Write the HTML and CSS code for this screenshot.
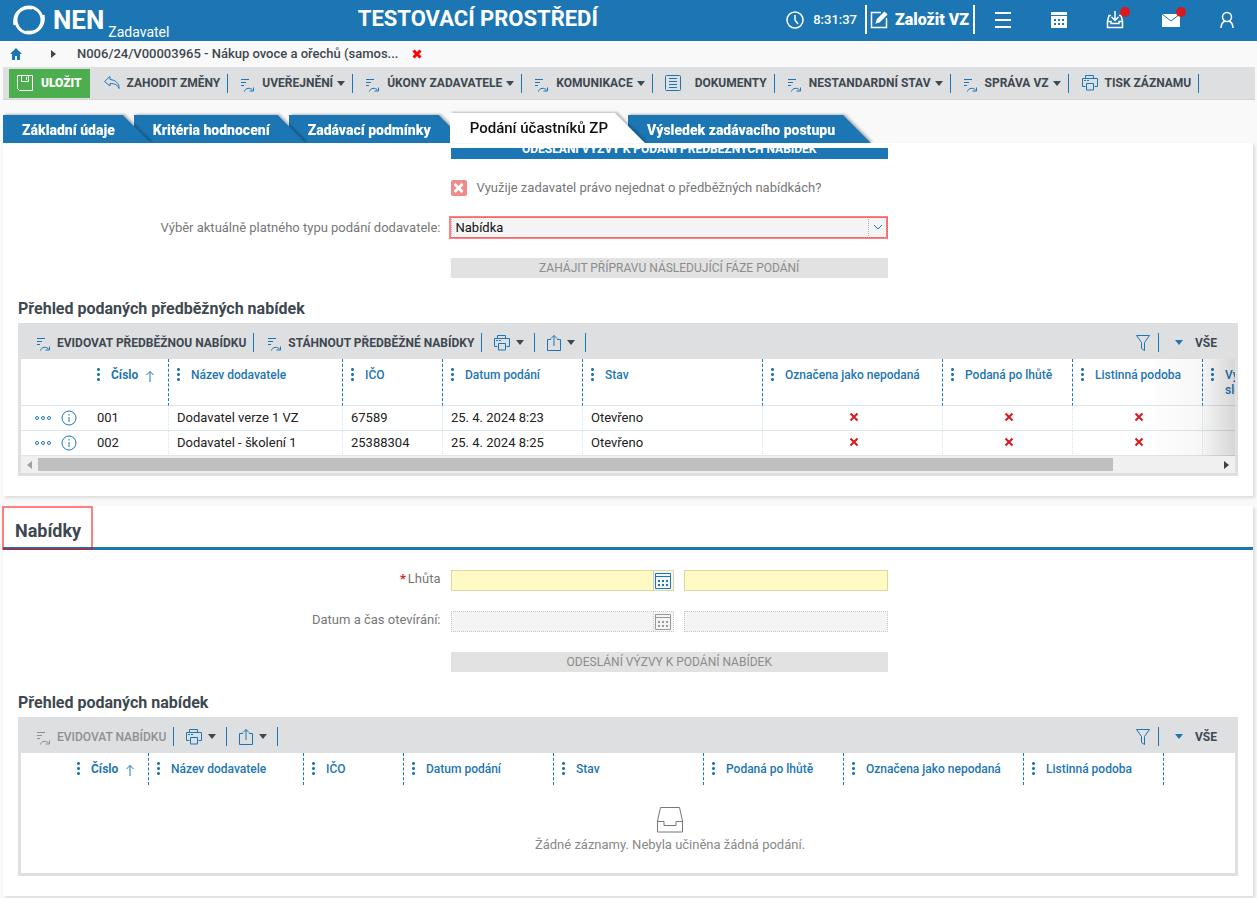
FILE: index.html
```html
<!DOCTYPE html>
<html lang="cs">
<head>
<meta charset="utf-8">
<meta name="viewport" content="width=device-width, initial-scale=1">
<title>NEN Zadavatel</title>
<link rel="stylesheet" href="styles.css">
</head>
<body>
<svg class="sprite" aria-hidden="true">
  <symbol id="i-flow" viewBox="0 0 16 16"><path d="M1 2.500h8M1 5.500h5M1 8.500h3M4.500 14.500c.5-3.500 6-4.500 8.500-1M13.500 10.500v3.500h-4"/></symbol>
  <symbol id="i-print" viewBox="0 0 18 18"><path d="M4.500 4.500v-3h8v3M4.500 12.500h-3v-8h15v8h-3M5.500 9.500h7v6.500h-7zM3 6.500h2M6 6.500h2"/></symbol>
  <symbol id="i-share" viewBox="0 0 16 18"><path d="M5 5.500H1.500v11h13v-11H11M8 12V1.500M5 4.500l3-3 3 3"/></symbol>
  <symbol id="i-filter" viewBox="0 0 16 18"><path d="M1.500 1.500h13l-5 7v8l-3-2v-6z"/></symbol>
  <symbol id="i-doc" viewBox="0 0 18 18"><rect x="1.500" y="1.500" width="15" height="15" rx="1"/><path d="M5 4.500h8M5 7.500h8M5 10.500h8M5 13.500h8"/></symbol>
  <symbol id="i-undo" viewBox="0 0 18 16"><path d="M7 1.500L1.500 6.500 7 11V8.500c5 0 7.500 1.500 9 5 .5-5-3.500-8.500-9-9z"/></symbol>
  <symbol id="i-save" viewBox="0 0 18 18"><path d="M1.500 1.500h15v15h-13l-2-2zM5.500 1.500v6h7v-6M10.500 3v3"/></symbol>
  <symbol id="i-info" viewBox="0 0 16 16"><circle cx="8" cy="8" r="7"/><path d="M8 7v5M8 4v1.500"/></symbol>
  <symbol id="i-more" viewBox="0 0 18 6"><circle cx="3" cy="3" r="1.500"/><circle cx="9" cy="3" r="1.500"/><circle cx="15" cy="3" r="1.500"/></symbol>
  <symbol id="i-up" viewBox="0 0 10 12"><path d="M5 12V1.500M1.500 5L5 1.500 8.500 5"/></symbol>
  <symbol id="i-x" viewBox="0 0 10 10"><path d="M1.500 1.500l7 7M8.500 1.500l-7 7"/></symbol>
  <symbol id="i-cal" viewBox="0 0 16 16"><path d="M.5.5h15v15H.5zM.5 3.500h15"/><path d="M3 8h10M3 12h10" stroke-width="2" stroke-dasharray="2 2"/></symbol>
</svg>

<header class="top">
  <div class="brand">
    <svg class="brand-ring" viewBox="0 0 32 32"><circle cx="16" cy="16" r="13"/><path d="M2 21C0 10 8 2 19 4M30 11C32 22 24 30 13 28"/></svg>
    <span class="brand-name">NEN</span><span class="brand-role">Zadavatel</span>
  </div>
  <h1 class="env">TESTOVACÍ PROSTŘEDÍ</h1>
  <div class="clock">
    <svg class="line" width="18" height="18" viewBox="0 0 18 18"><circle cx="9" cy="9" r="8"/><path d="M9 4v5l3 4"/></svg>
    <time>8:31:37</time>
  </div>
  <button class="create" type="button">
    <svg class="line" width="18" height="18" viewBox="0 0 18 18"><path d="M11 1.500H1.500v15h15V7"/><path d="M6.500 11.500l1-3 7-7 2 2-7 7z" fill="#fff"/></svg>
    Založit VZ
  </button>
  <nav class="top-nav">
    <button type="button" aria-label="Menu"><svg class="line thick" width="18" height="18" viewBox="0 0 18 18"><path d="M1 2h16M1 9h16M1 16h16"/></svg></button>
    <button type="button" aria-label="Kalendář"><svg width="18" height="18" viewBox="0 0 18 18"><path d="M1 1h16v3H1zM1 5h16v12H1z" fill="#fff"/><path d="M4 9h10M4 13h10" stroke="#1d76b4" stroke-width="2" stroke-dasharray="2 2"/></svg></button>
    <button type="button" aria-label="Stažené"><svg class="line" width="18" height="18" viewBox="0 0 18 18"><path d="M5 4.500H3L1.500 10v6.500h15V10L15 4.500h-2M1.500 10.500H5v2h8v-2h3.500M9 0v9M5.500 6L9 9.500 12.500 6"/></svg><i class="dot"></i></button>
    <button type="button" aria-label="Zprávy"><svg width="18" height="18" viewBox="0 0 18 18"><path d="M0 3h18v13H0z" fill="#fff"/><path d="M0 3l9 7 9-7" fill="none" stroke="#1d76b4"/></svg><i class="dot"></i></button>
    <button type="button" aria-label="Uživatel"><svg class="line" width="18" height="18" viewBox="0 0 18 18"><circle cx="9" cy="6" r="4.500"/><path d="M3 17c0-4 2-6 4-7M15 17c0-4-2-6-4-7"/></svg></button>
  </nav>
</header>

<nav class="crumbs">
  <a href="#" aria-label="Domů"><svg width="12" height="12" viewBox="0 0 12 12"><path d="M6 0l6 6h-2v6H7V8H5v4H2V6H0z" fill="#1d76b4"/></svg></a>
  <i class="caret-right"></i>
  <a class="crumb-text" href="#">N006/24/V00003965 - Nákup ovoce a ořechů (samos...</a>
  <button type="button" class="close" aria-label="Zavřít"><svg width="10" height="10"><use href="#i-x"/></svg></button>
</nav>

<div class="toolbar">
  <button type="button" class="save"><svg class="ic" width="18" height="18"><use href="#i-save"/></svg>ULOŽIT</button>
  <button type="button" class="tool"><svg class="ic" width="18" height="16"><use href="#i-undo"/></svg>ZAHODIT ZMĚNY</button>
  <button type="button" class="tool"><svg class="ic low" width="16" height="16"><use href="#i-flow"/></svg>UVEŘEJNĚNÍ<i class="caret"></i></button>
  <button type="button" class="tool"><svg class="ic low" width="16" height="16"><use href="#i-flow"/></svg>ÚKONY ZADAVATELE<i class="caret"></i></button>
  <button type="button" class="tool"><svg class="ic low" width="16" height="16"><use href="#i-flow"/></svg>KOMUNIKACE<i class="caret"></i></button>
  <button type="button" class="tool wide"><svg class="ic" width="18" height="18"><use href="#i-doc"/></svg>DOKUMENTY</button>
  <button type="button" class="tool"><svg class="ic low" width="16" height="16"><use href="#i-flow"/></svg>NESTANDARDNÍ STAV<i class="caret"></i></button>
  <button type="button" class="tool"><svg class="ic low" width="16" height="16"><use href="#i-flow"/></svg>SPRÁVA VZ<i class="caret"></i></button>
  <button type="button" class="tool"><svg class="ic" width="18" height="18"><use href="#i-print"/></svg>TISK ZÁZNAMU</button>
</div>

<ul class="tabs">
  <li class="t1"><button type="button">Základní údaje</button></li>
  <li class="t2"><button type="button">Kritéria hodnocení</button></li>
  <li class="t3"><button type="button">Zadávací podmínky</button></li>
  <li class="active"><button type="button">Podání účastníků ZP</button></li>
  <li class="t5"><button type="button">Výsledek zadávacího postupu</button></li>
</ul>

<main>
  <section class="panel first">
    <div class="scroll">
      <div class="form">
        <button type="button" class="wide-btn primary">ODESLÁNÍ VÝZVY K PODÁNÍ PŘEDBĚŽNÝCH NABÍDEK</button>
        <label class="check"><input type="checkbox" checked>Využije zadavatel právo nejednat o předběžných nabídkách?</label>
        <label class="lbl" for="typ">Výběr aktuálně platného typu podání dodavatele:</label>
        <div class="select marked">
          <select id="typ"><option>Nabídka</option></select>
          <svg class="ic" width="10" height="6" viewBox="0 0 10 6"><path d="M1 1l4 4 4-4"/></svg>
        </div>
        <button type="button" class="wide-btn" disabled>ZAHÁJIT PŘÍPRAVU NÁSLEDUJÍCÍ FÁZE PODÁNÍ</button>
      </div>
    </div>
    <div class="block">
      <h3>Přehled podaných předběžných nabídek</h3>
      <div class="grid">
        <div class="grid-bar">
          <button type="button" class="tool"><svg class="ic low" width="16" height="16"><use href="#i-flow"/></svg>EVIDOVAT PŘEDBĚŽNOU NABÍDKU</button>
          <button type="button" class="tool"><svg class="ic low" width="16" height="16"><use href="#i-flow"/></svg>STÁHNOUT PŘEDBĚŽNÉ NABÍDKY</button>
          <button type="button" class="tool icon-only" aria-label="Tisk"><svg class="ic" width="18" height="18"><use href="#i-print"/></svg><i class="caret"></i></button>
          <button type="button" class="tool icon-only" aria-label="Export"><svg class="ic" width="16" height="18"><use href="#i-share"/></svg><i class="caret"></i></button>
          <button type="button" class="tool filter" aria-label="Filtr"><svg class="ic" width="16" height="18"><use href="#i-filter"/></svg></button>
          <button type="button" class="all"><i class="caret"></i>VŠE</button>
        </div>
        <div class="grid-body fade">
          <table class="tall">
            <colgroup><col class="w68"><col class="w80"><col class="w174"><col class="w100"><col class="w140"><col class="w180"><col class="w180"><col class="w130"><col class="w130"><col class="w140"></colgroup>
            <thead><tr>
              <th></th>
              <th class="sorted"><i class="dots"></i>Číslo<svg class="ic" width="10" height="12"><use href="#i-up"/></svg></th>
              <th><i class="dots"></i>Název dodavatele</th>
              <th><i class="dots"></i>IČO</th>
              <th><i class="dots"></i>Datum podání</th>
              <th><i class="dots"></i>Stav</th>
              <th><i class="dots"></i>Označena jako nepodaná</th>
              <th><i class="dots"></i>Podaná po lhůtě</th>
              <th><i class="dots"></i>Listinná podoba</th>
              <th><i class="dots"></i>Vyloučen<br>služebně</th>
            </tr></thead>
            <tbody>
              <tr>
                <td class="acts"><button type="button" aria-label="Akce"><svg class="ic" width="18" height="6"><use href="#i-more"/></svg></button><button type="button" aria-label="Detail"><svg class="ic" width="16" height="16"><use href="#i-info"/></svg></button></td>
                <td>001</td><td>Dodavatel verze 1 VZ</td><td>67589</td><td>25. 4. 2024 8:23</td><td>Otevřeno</td>
                <td class="no"><svg width="10" height="10"><use href="#i-x"/></svg></td><td class="no"><svg width="10" height="10"><use href="#i-x"/></svg></td><td class="no"><svg width="10" height="10"><use href="#i-x"/></svg></td><td></td>
              </tr>
              <tr>
                <td class="acts"><button type="button" aria-label="Akce"><svg class="ic" width="18" height="6"><use href="#i-more"/></svg></button><button type="button" aria-label="Detail"><svg class="ic" width="16" height="16"><use href="#i-info"/></svg></button></td>
                <td>002</td><td>Dodavatel - školení 1</td><td>25388304</td><td>25. 4. 2024 8:25</td><td>Otevřeno</td>
                <td class="no"><svg width="10" height="10"><use href="#i-x"/></svg></td><td class="no"><svg width="10" height="10"><use href="#i-x"/></svg></td><td class="no"><svg width="10" height="10"><use href="#i-x"/></svg></td><td></td>
              </tr>
            </tbody>
          </table>
        </div>
        <div class="hbar"><i class="arrow-l"></i><span class="track"><span class="thumb"></span></span><i class="arrow-r"></i></div>
      </div>
    </div>
  </section>

  <section class="panel">
    <div class="panel-head"><h2 class="marked">Nabídky</h2></div>
    <div class="form second">
      <label class="lbl" for="lhuta"><span class="req">*</span>Lhůta</label>
      <div class="pair">
        <div class="date"><input id="lhuta" type="text"><button type="button" aria-label="Kalendář"><svg class="ic" width="16" height="16"><use href="#i-cal"/></svg></button></div>
        <input class="field" type="text" aria-label="Čas lhůty">
      </div>
      <label class="lbl" for="otevirani">Datum a čas otevírání:</label>
      <div class="pair off">
        <div class="date"><input id="otevirani" type="text" disabled><button type="button" aria-label="Kalendář" disabled><svg class="ic" width="16" height="16"><use href="#i-cal"/></svg></button></div>
        <input class="field" type="text" aria-label="Čas otevírání" disabled>
      </div>
      <button type="button" class="wide-btn" disabled>ODESLÁNÍ VÝZVY K PODÁNÍ NABÍDEK</button>
    </div>
    <div class="block">
      <h3>Přehled podaných nabídek</h3>
      <div class="grid">
        <div class="grid-bar">
          <button type="button" class="tool" disabled><svg class="ic low" width="16" height="16"><use href="#i-flow"/></svg>EVIDOVAT NABÍDKU</button>
          <button type="button" class="tool icon-only" aria-label="Tisk"><svg class="ic" width="18" height="18"><use href="#i-print"/></svg><i class="caret"></i></button>
          <button type="button" class="tool icon-only" aria-label="Export"><svg class="ic" width="16" height="18"><use href="#i-share"/></svg><i class="caret"></i></button>
          <button type="button" class="tool filter" aria-label="Filtr"><svg class="ic" width="16" height="18"><use href="#i-filter"/></svg></button>
          <button type="button" class="all"><i class="caret"></i>VŠE</button>
        </div>
        <div class="grid-body">
          <table class="short">
            <colgroup><col class="w48"><col class="w80"><col class="w155"><col class="w100"><col class="w150"><col class="w150"><col class="w140"><col class="w180"><col class="w140"></colgroup>
            <thead><tr>
              <th></th>
              <th class="sorted"><i class="dots"></i>Číslo<svg class="ic" width="10" height="12"><use href="#i-up"/></svg></th>
              <th><i class="dots"></i>Název dodavatele</th>
              <th><i class="dots"></i>IČO</th>
              <th><i class="dots"></i>Datum podání</th>
              <th><i class="dots"></i>Stav</th>
              <th><i class="dots"></i>Podaná po lhůtě</th>
              <th><i class="dots"></i>Označena jako nepodaná</th>
              <th><i class="dots"></i>Listinná podoba</th>
            </tr></thead>
          </table>
        </div>
        <div class="empty">
          <svg width="28" height="26" viewBox="0 0 28 26"><path d="M4.500.5h19L26.500 14v11h-25V14zM1.500 14.500h6.500v4h12v-4h6.500"/></svg>
          <p>Žádné záznamy. Nebyla učiněna žádná podání.</p>
        </div>
      </div>
    </div>
  </section>
</main>
</body>
</html>
```
FILE: styles.css
```css
:root {
  --blue: #1d76b4;
  --dark: #3e4850;
  --bar: #dedfe0;
  --grey: #777;
  --mark: rgba(255, 0, 0, .5);
}
* { box-sizing: border-box; }
body {
  margin: 0;
  background: #f9f9f9;
  font-family: Roboto, "Liberation Sans", sans-serif;
  font-size: 13px;
  line-height: 16px;
  color: #222;
}
button, input, select { font: inherit; color: inherit; margin: 0; }
button { border: 0; background: none; padding: 0; cursor: pointer; white-space: nowrap; }
h1, h2, h3, p, ul { margin: 0; padding: 0; }
.sprite { position: absolute; width: 0; height: 0; }
svg { display: block; flex: none; }
.ic { fill: none; stroke: var(--blue); stroke-width: 1; }
.line { fill: none; stroke: #fff; stroke-width: 1.5; }
.line.thick { stroke-width: 2; }

.top {
  display: flex;
  align-items: center;
  height: 41px;
  padding: 0 2px 2px 13px;
  background: var(--blue);
  color: #fff;
}
.brand { display: flex; align-items: center; }
.brand-ring { width: 32px; height: 32px; fill: none; stroke: #fff; stroke-width: 3; }
.brand-name { margin-left: 8px; font-size: 26px; font-weight: 700; line-height: 32px; }
.brand-role { align-self: flex-end; margin-left: 4px; font-size: 14px; line-height: 7px; }
.env { flex: 1; text-align: center; font-size: 22px; line-height: 24px; height: 26px; font-weight: 700; }
.clock { display: flex; align-items: center; gap: 9px; margin-right: 8px; font-weight: 500; }
.create {
  display: flex;
  align-items: center;
  gap: 7px;
  height: 29px;
  padding: 0 4px 0 3px;
  border: solid #fff;
  border-width: 0 2px;
  font-size: 16px;
  font-weight: 900;
}
.top-nav { display: flex; }
.top-nav button { position: relative; display: grid; place-items: center; width: 56px; height: 36px; }
.dot { position: absolute; right: 13px; top: 5px; width: 10px; height: 10px; border-radius: 50%; background: #d8191f; }

.crumbs { display: flex; align-items: center; height: 26px; padding: 0 10px; font-weight: 500; }
.caret-right { margin: 0 21px 0 29px; border: solid transparent; border-width: 4px 0 4px 5px; border-left-color: var(--dark); }
.crumb-text { color: var(--dark); text-decoration: none; }
.close { margin-left: 14px; }
.close svg { stroke: #f00; stroke-width: 3; }

.toolbar {
  display: flex;
  align-items: center;
  height: 33px;
  margin: 0 2px 0 3px;
  padding: 0 6px;
  background: var(--bar);
  border-bottom: 1px solid #d2d3d4;
}
.save {
  display: flex;
  align-items: center;
  gap: 7px;
  height: 29px;
  margin-right: 1px;
  padding: 0 8px 0 7px;
  background: #4cae4f;
  color: #fff;
  font-size: 12px;
  font-weight: 900;
}
.save .ic { stroke: #fff; }
.tool {
  display: flex;
  align-items: center;
  gap: 6px;
  height: 19px;
  padding: 0 7px 0 12px;
  border-right: 1px solid var(--blue);
  color: var(--dark);
  font-size: 12px;
  font-weight: 700;
}
.tool.wide { gap: 13px; padding-left: 11px; }
.tool .low { align-self: flex-end; }
.tool .caret { margin-left: -2px; }
.tool:disabled { color: #8e8f90; font-weight: 500; }
.tool:disabled .ic { stroke: #8e8f90; }
.caret { border: solid transparent; border-width: 5px 4px 0; border-top-color: var(--dark); }

.tabs { display: flex; align-items: flex-end; height: 43px; padding-left: 3px; list-style: none; }
.tabs li { position: relative; margin-right: -17px; filter: drop-shadow(2px -1px 1px rgba(0, 0, 0, .25)); }
.tabs button {
  display: block;
  height: 28px;
  padding: 2px 36px 0 19px;
  background: var(--blue);
  color: #fff;
  font-size: 14px;
  font-weight: 900;
  clip-path: polygon(0 0, calc(100% - 28px) 0, 100% 100%, 0 100%);
}
.t1 { z-index: 3; }
.t2 { z-index: 2; }
.t3, .t5 { z-index: 1; }
.tabs .active { z-index: 4; }
.tabs .active button {
  height: 30px;
  padding: 0 37px 0 20px;
  background: #fff;
  color: #111;
  font-size: 15px;
  font-weight: 500;
  clip-path: polygon(0 0, calc(100% - 30px) 0, 100% 100%, 0 100%);
}

.panel {
  margin: 0 4px 10px 3px;
  padding-bottom: 20px;
  background: #fff;
  box-shadow: 2px 2px 3px rgba(0, 0, 0, .12);
}
.first { padding-top: 5px; }
.scroll { overflow: hidden; }
.form {
  display: grid;
  grid-template-columns: 35% 35%;
  column-gap: 10px;
  row-gap: 20px;
  align-items: center;
}
.scroll .form { margin-top: -9px; }
.wide-btn {
  grid-column: 2;
  height: 20px;
  background: #e2e2e2;
  color: #8c8c8c;
  font-size: 12px;
  text-align: center;
}
.wide-btn.primary { background: var(--blue); color: #fff; font-weight: 700; }
.check { grid-column: 2; display: flex; align-items: center; gap: 10px; height: 18px; color: var(--grey); white-space: nowrap; }
.check input { appearance: none; display: grid; place-items: center; width: 16px; height: 16px; border-radius: 2px; background: #ee8b8b; }
.check input:checked::before {
  content: "";
  width: 10px;
  height: 10px;
  background: #fff;
  clip-path: polygon(0 20%, 20% 0, 50% 30%, 80% 0, 100% 20%, 70% 50%, 100% 80%, 80% 100%, 50% 70%, 20% 100%, 0 80%, 30% 50%);
}
.lbl { text-align: right; color: var(--grey); }
.req { margin-right: 2px; color: #e02020; font-weight: 700; }
.marked { position: relative; }
.marked::after { content: ""; position: absolute; inset: -1px 0 -1px -2px; border: 2px solid var(--mark); pointer-events: none; }
.select { height: 21px; }
.select select {
  appearance: none;
  display: block;
  width: 100%;
  height: 21px;
  padding: 0 24px 0 4px;
  border: 1px dotted #c4c4c4;
  border-radius: 0;
  background: #f4f4f4;
  color: #111;
}
.select .ic { position: absolute; right: 5px; top: 7px; }
.select::before { content: ""; position: absolute; right: 19px; top: 2px; bottom: 2px; border-left: 1px dotted #b0b0b0; }

.block { padding: 0 15px; }
h3 { padding: 20px 0 4px; font-size: 16px; line-height: 21px; font-weight: 700; color: var(--dark); }
.grid { border: 3px solid var(--bar); border-top: 0; }
.grid-bar { display: flex; align-items: center; height: 36px; padding: 3px 18px 0 2px; background: var(--bar); }
.grid-bar .tool { gap: 5px; padding-left: 13px; }
.grid-bar .tool.icon-only { padding-right: 10px; padding-left: 11px; }
.grid-bar .icon-only .caret { margin-left: 0; }
.grid-bar .filter { margin-left: auto; padding: 0 7px 0 0; }
.all { display: flex; align-items: center; gap: 12px; padding-left: 16px; font-size: 12px; font-weight: 700; color: var(--dark); }
.all .caret { border-top-color: var(--blue); }

.grid-body { position: relative; overflow: hidden; }
.fade::after { content: ""; position: absolute; inset: 0 0 0 auto; width: 90px; background: linear-gradient(90deg, rgba(0, 0, 0, 0), rgba(0, 0, 0, .03) 60%, rgba(0, 0, 0, .16)); pointer-events: none; }
table { table-layout: fixed; width: 0; border-collapse: separate; border-spacing: 0; }
.w48 { width: 48px; } .w68 { width: 68px; } .w80 { width: 80px; } .w100 { width: 100px; }
.w130 { width: 130px; } .w140 { width: 140px; } .w150 { width: 150px; } .w155 { width: 155px; }
.w174 { width: 174px; } .w180 { width: 180px; }
th {
  position: relative;
  height: 32px;
  padding: 9px 0 0 22px;
  border-right: 1px dashed var(--blue);
  vertical-align: top;
  text-align: left;
  color: var(--blue);
  font-size: 12px;
  font-weight: 500;
  line-height: 15px;
  white-space: nowrap;
}
th:first-child { border-right: 0; }
.tall th { height: 47px; border-bottom: 1px solid #dce7ec; }
.sorted { font-weight: 700; }
.sorted .ic { display: inline-block; margin-left: 7px; vertical-align: -3px; }
.dots { position: absolute; left: 8px; top: 8px; width: 3px; height: 15px; background: radial-gradient(circle closest-side, var(--blue) 90%, transparent) 0 0 / 3px 5px; }
td { height: 25px; padding: 0 8px; border-right: 1px dotted #d4e2e9; border-bottom: 1px solid #dce7ec; white-space: nowrap; }
.acts { border-right: 0; padding: 0 0 0 13px; }
.acts button { display: inline-block; vertical-align: middle; margin-right: 9px; }
.acts button + button { margin-right: 0; }
.no { padding-bottom: 3px; padding-left: 10px; }
.no svg { margin: 0 auto; stroke: #d8191f; stroke-width: 2; }

.hbar { display: flex; align-items: center; height: 17px; padding: 0 6px; background: #f0f0f0; }
.track { flex: 1; margin: 0 5px 0 6px; }
.thumb { display: block; width: 91%; height: 13px; background: #bfbfbf; }
.arrow-l, .arrow-r { border: solid transparent; border-width: 4px 0; }
.arrow-l { border-right: 5px solid #a0a0a0; }
.arrow-r { border-left: 5px solid #404040; }

.panel-head { border-bottom: 3px solid var(--blue); }
.panel-head h2 { display: inline-block; vertical-align: top; padding: 13px 12px 4px; height: 41px; font-size: 18px; line-height: 24px; font-weight: 700; color: var(--dark); }
.panel-head .marked::after { inset: 0 0 -3px -1px; }
.second { padding-top: 20px; }
.second .lbl { line-height: 18px; align-self: start; }
.pair { display: flex; gap: 10px; }
.date { display: flex; flex: 1 1 224px; min-width: 0; border: 1px solid #dcd8a4; background: #fff9c4; }
.date input { flex: 1; min-width: 0; height: 19px; padding: 0 4px; border: 0; background: transparent; }
.date button { padding: 0 2px 0 1px; border-left: 1px solid #c8c8c8; background: #f4f4f4; }
.field { flex: 1 1 204px; min-width: 0; height: 21px; padding: 0 4px; border: 1px solid #dcd8a4; border-radius: 0; background: #fff9c4; }
.off .date, .off .field { border: 1px dotted #c8c8c8; background: #f4f4f4; }
.off button { border-left-style: dotted; }
.off .ic { stroke: #999; }

.empty { display: flex; flex-direction: column; align-items: center; gap: 4px; height: 88px; padding: 22px 0 0 84px; font-size: 13px; color: #888; }
.empty svg { fill: none; stroke: #777; }
```
